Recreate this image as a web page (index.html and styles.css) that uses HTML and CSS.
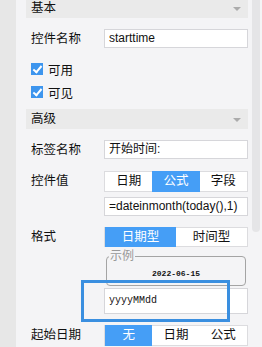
FILE: index.html
```html
<!DOCTYPE html>
<html lang="zh-CN">
<head>
    <meta charset="UTF-8">
    <title>控件属性</title>
    <link rel="stylesheet" href="styles.css">
</head>
<body>
    <div class="page">
        <div class="side"></div>

        <div class="panel">
            <div class="group-head">基本<span class="caret"></span></div>

            <div class="row r-first">
                <div class="label">控件名称</div>
                <div class="field"><div class="input">starttime</div></div>
            </div>

            <div class="check c-first"><span class="box"></span>可用</div>
            <div class="check c-second"><span class="box"></span>可见</div>

            <div class="group-head g-second">高级<span class="caret"></span></div>

            <div class="row">
                <div class="label">标签名称</div>
                <div class="field"><div class="input">开始时间:</div></div>
            </div>

            <div class="row">
                <div class="label">控件值</div>
                <div class="field">
                    <div class="seg">
                        <span>日期</span><span class="on">公式</span><span>字段</span>
                    </div>
                    <div class="input formula">=dateinmonth(today(),1)</div>
                </div>
            </div>

            <div class="row">
                <div class="label">格式</div>
                <div class="field">
                    <div class="seg seg-two">
                        <span class="on">日期型</span><span>时间型</span>
                    </div>
                    <fieldset class="sample">
                        <legend>示例</legend>
                        <div class="sample-date">2022-06-15</div>
                    </fieldset>
                    <div class="input pattern">yyyyMMdd</div>
                </div>
            </div>

            <div class="row">
                <div class="label">起始日期</div>
                <div class="field">
                    <div class="seg">
                        <span class="on">无</span><span>日期</span><span>公式</span>
                    </div>
                </div>
            </div>
        </div>

        <div class="scroll"><div class="thumb"></div></div>

        <!-- highlight box drawn over the format input -->
        <div class="focus-mark"></div>
    </div>
</body>
</html>
```

FILE: styles.css
```css
body {
    margin: 0;
    padding: 0;
    background-color: #f4f4f6;
    font-family: "Liberation Sans", "Noto Sans CJK SC", sans-serif;
    font-size: 12px;
    color: #111;
}

.page {
    position: relative;
    display: flex;
    width: 262px;
    height: 347px;
    overflow: hidden;
}

.side {
    width: 16px;
    background: #e7e7e7;
}

.panel {
    flex: 1;
    padding: 0 4px 0 10px;
    margin-top: -2px;
}

.group-head {
    position: relative;
    height: 20px;
    line-height: 20px;
    padding-left: 5px;
    background: #eaeaea;
    font-size: 12.5px;
}

.g-second {
    margin-top: 11px;
}

.caret {
    position: absolute;
    right: 7px;
    top: 9px;
    width: 0;
    height: 0;
    border-left: 4px solid transparent;
    border-right: 4px solid transparent;
    border-top: 4px solid #ababab;
}

.row {
    display: flex;
    margin-top: 11px;
}

.label {
    width: 73px;
    padding-left: 5px;
    line-height: 20px;
    font-size: 12.5px;
}

.field {
    width: 144px;
}

.input {
    box-sizing: border-box;
    height: 19px;
    line-height: 17px;
    padding-left: 4px;
    background: #fff;
    border: 1px solid #d6d6da;
    white-space: nowrap;
    overflow: hidden;
}

.formula {
    margin-top: 5px;
}

.check {
    display: flex;
    align-items: center;
    height: 12px;
    padding-left: 5px;
    font-size: 12.5px;
}

.c-first {
    margin-top: 14px;
}

.c-second {
    margin-top: 11px;
}

.box {
    position: relative;
    width: 12px;
    height: 12px;
    margin-right: 5px;
    background: #3d95ee;
}

.box::after {
    content: "";
    position: absolute;
    left: 4px;
    top: 1px;
    width: 3px;
    height: 7px;
    border-right: 2px solid #fff;
    border-bottom: 2px solid #fff;
    transform: rotate(40deg);
}

.seg {
    display: flex;
    height: 21px;
    box-sizing: border-box;
    background: #fff;
    border: 1px solid #dcdcdf;
}

.seg span {
    flex: 1;
    text-align: center;
    line-height: 19px;
    font-size: 12.5px;
}

.seg .on {
    background: #459ef6;
    color: #fff;
    margin: -1px 0;
    line-height: 21px;
}

.seg-two {
    height: 20px;
}

.seg-two span {
    line-height: 18px;
}

.seg-two .on {
    line-height: 20px;
}

.sample {
    margin: 3px 2px 0;
    padding: 4px 0 3px;
    border: 1px solid #a4a4a4;
    border-radius: 4px;
    min-width: 0;
}

.sample legend {
    margin-left: 2px;
    padding: 0 1px;
    line-height: 12px;
    color: #999;
    font-size: 12px;
}

.sample-date {
    height: 16px;
    line-height: 16px;
    text-align: center;
    font-family: "Liberation Mono", monospace;
    font-size: 8px;
    font-weight: bold;
}

.pattern {
    margin-top: 2px;
    height: 26px;
    line-height: 24px;
    font-family: "Liberation Mono", monospace;
    font-size: 10px;
}

.scroll {
    width: 10px;
}

.thumb {
    width: 8px;
    height: 232px;
    background: #e5e5e7;
    border-radius: 0 0 4px 4px;
}

.focus-mark {
    position: absolute;
    left: 81px;
    top: 280px;
    width: 143px;
    height: 36px;
    border: 3px solid #3a8fe0;
}
```
